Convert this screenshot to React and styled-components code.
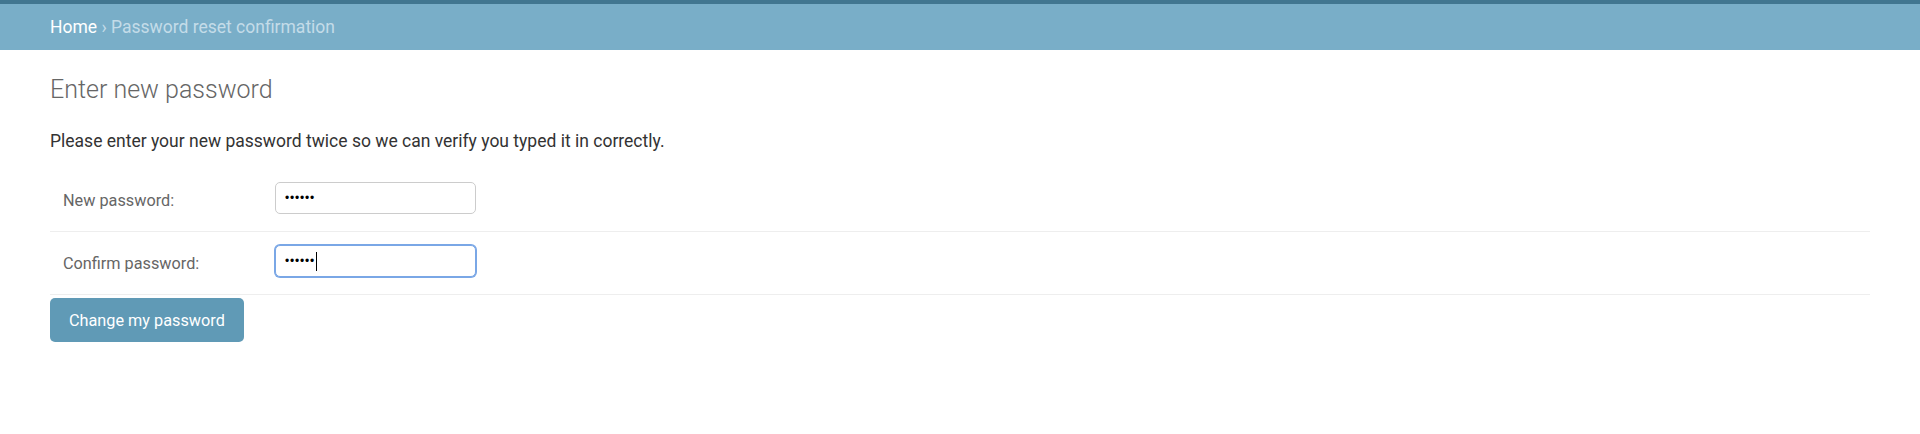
import React from 'react';
import styled, { createGlobalStyle } from 'styled-components';

const GlobalStyle = createGlobalStyle`
  body {
    margin: 0;
    background: #fff;
    font-family: Roboto, "Liberation Sans", Arial, sans-serif;
    color: #333;
  }
`;

const TopBar = styled.div`
  height: 4px;
  background: #417690;
`;

const Breadcrumbs = styled.div`
  display: flex;
  align-items: center;
  height: 46px;
  padding: 0 50px;
  background: #79aec8;
  color: #c4dce8;
  font-size: 17.5px;
  a {
    color: #fff;
    text-decoration: none;
  }
`;

const Content = styled.div`
  padding: 25px 50px;
`;

const Title = styled.h1`
  margin: 0 0 25px;
  font-size: 25px;
  line-height: 30px;
  font-weight: 300;
  color: #666;
`;

const Intro = styled.p`
  margin: 0 0 16.5px;
  font-size: 17.5px;
  line-height: 22.5px;
  color: #333;
`;

const Row = styled.div`
  display: flex;
  align-items: flex-start;
  padding: 13px 13px 17px;
  border-bottom: 1px solid #eee;
`;

const Label = styled.label`
  width: 212px;
  margin-top: 9px;
  font-size: 16.25px;
  line-height: 20px;
  color: #666;
`;

const Field = styled.div`
  position: relative;
`;

const Input = styled.input`
  display: block;
  box-sizing: border-box;
  width: 201px;
  height: 32px;
  padding: 0 9px;
  border: 1px solid ${(p) => (p.$focused ? '#7aa7e6' : '#ccc')};
  border-radius: 5px;
  box-shadow: ${(p) => (p.$focused ? '0 0 0 1px #7aa7e6' : 'none')};
  font-family: "Liberation Sans", Arial, sans-serif;
  font-size: 12px;
  letter-spacing: 0.8px;
  color: #000;
  outline: none;
`;

const Caret = styled.span`
  position: absolute;
  left: 41px;
  top: 7px;
  width: 1px;
  height: 19px;
  background: #000;
`;

const SubmitButton = styled.button`
  display: block;
  margin-top: 3px;
  height: 44px;
  padding: 0 19px;
  border: none;
  border-radius: 5px;
  background: #609ab6;
  color: #fff;
  font-family: Roboto, "Liberation Sans", Arial, sans-serif;
  font-size: 16.25px;
  cursor: pointer;
`;

const App = () => {
  return (
    <>
      <GlobalStyle />
      <TopBar />
      <Breadcrumbs>
        <a href="#">Home</a>&nbsp;›&nbsp;Password reset confirmation
      </Breadcrumbs>
      <Content>
        <Title>Enter new password</Title>
        <Intro>Please enter your new password twice so we can verify you typed it in correctly.</Intro>
        <form onSubmit={(e) => e.preventDefault()}>
          <Row>
            <Label htmlFor="id_new_password1">New password:</Label>
            <Field>
              <Input id="id_new_password1" type="password" defaultValue="secret" />
            </Field>
          </Row>
          <Row>
            <Label htmlFor="id_new_password2">Confirm password:</Label>
            <Field>
              <Input id="id_new_password2" type="password" defaultValue="secret" $focused />
              <Caret />
            </Field>
          </Row>
          <SubmitButton type="submit">Change my password</SubmitButton>
        </form>
      </Content>
    </>
  );
};

export default App;
